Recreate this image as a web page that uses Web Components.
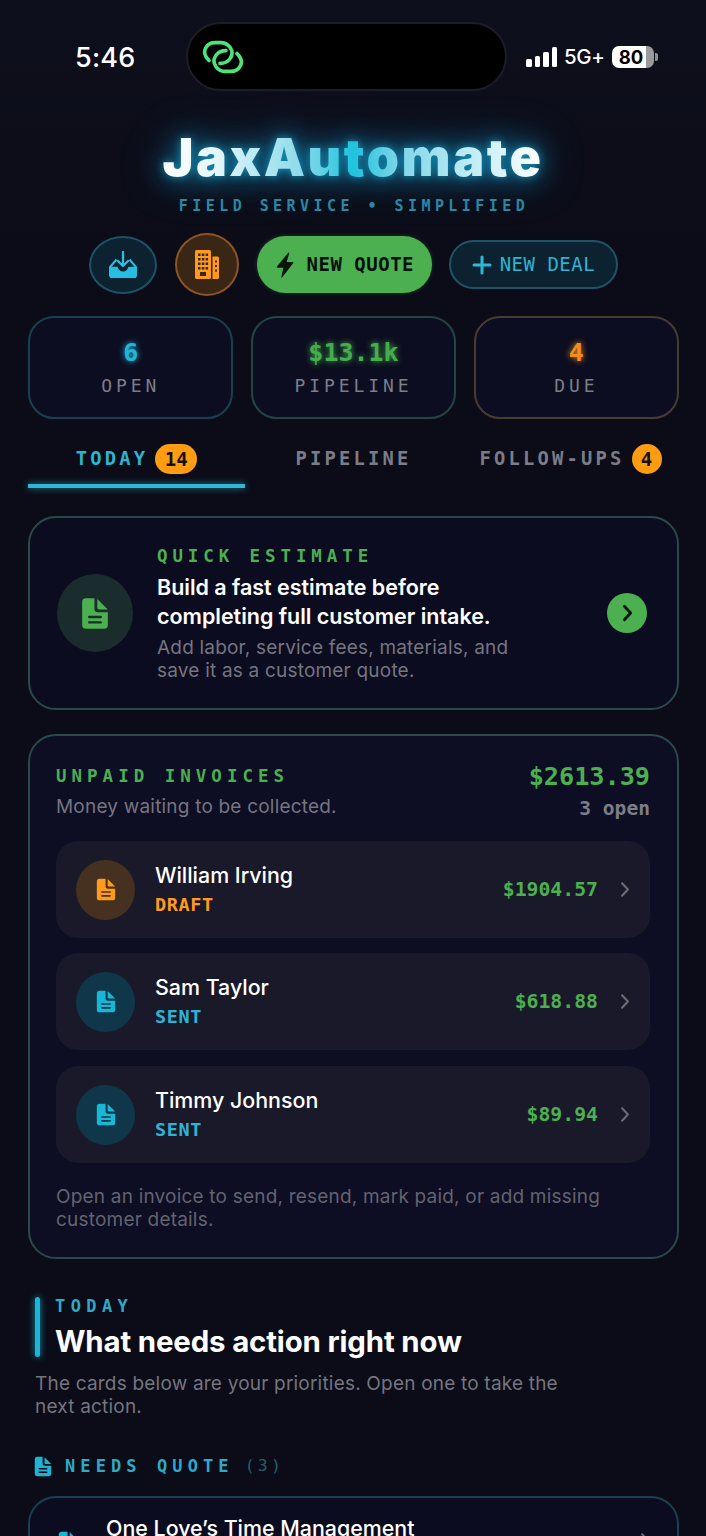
<!doctype html>
<html lang="en">
<head>
<meta charset="utf-8">
<title>JaxAutomate</title>
<style>
html,body{margin:0;padding:0;height:1536px;overflow:hidden;background:#0b0c17}
body{background:linear-gradient(#0e0f1c,#0b0c17 260px);font-family:Inter,"Liberation Sans",sans-serif;color:#fff}
</style>
</head>
<body>
<jax-app></jax-app>
<script>
const MONO='"DejaVu Sans Mono","Liberation Mono",monospace';
const ICONS={
 doc:(c,bg)=>`<svg viewBox="0 0 24 28" width="100%" height="100%"><path fill="${c}" d="M11.500 1H4.200A3.200 3.200 0 0 0 1 4.200v19.600A3.200 3.200 0 0 0 4.200 27h15.600a3.200 3.200 0 0 0 3.200-3.200V13H14.500a3 3 0 0 1-3-3z"/><path fill="${c}" d="M14 1.500V9a1.500 1.500 0 0 0 1.500 1.500H23z"/><path stroke="${bg}" stroke-width="2" stroke-linecap="round" d="M7 17h10M7 21.600h10"/></svg>`,
 chev:(c,w=2.6)=>`<svg viewBox="0 0 12 20" width="100%" height="100%"><path fill="none" stroke="${c}" stroke-width="${w}" stroke-linecap="round" stroke-linejoin="round" d="M2.500 2.500 9.500 10l-7 7.500"/></svg>`
};
function def(name,css,html){
  customElements.define(name,class extends HTMLElement{
    connectedCallback(){
      if(this.shadowRoot)return;
      const s=this.attachShadow({mode:'open'});
      s.innerHTML=`<style>${css}</style>`+(typeof html==='function'?html(this):html);
    }
  });
}
def('jax-status',`
:host{display:flex;align-items:center;height:69px;padding-top:22px;position:relative;font-family:Inter,sans-serif;color:#fff}
.time{width:186px;box-sizing:border-box;padding:2px 0 0 75px;font-size:27px;font-weight:500;letter-spacing:.2px;line-height:1}
.island{width:321px;height:69px;box-sizing:border-box;background:#000;border:2px solid #1d1d29;border-radius:35px;display:flex;align-items:center;padding-left:14px}
.right{display:flex;align-items:center;margin-left:19px;height:30px}
.bars{display:flex;align-items:flex-end;gap:3px;height:20px}
.bars i{display:block;width:5.500px;background:#fff;border-radius:1.500px}
.net{font-size:20.500px;font-weight:500;margin-left:7px;letter-spacing:-.4px}
.bat{margin-left:8px;width:42px;height:22px;border-radius:7px;background:linear-gradient(90deg,#fff 0,#fff 80%,#9a9a9d 80%);color:#000;font-size:18.500px;font-weight:700;display:flex;align-items:center;justify-content:center;padding-right:5px;box-sizing:border-box}
.tip{width:2.500px;height:8px;background:#8f8f92;border-radius:0 2px 2px 0;margin-left:1px}
`,`<div class="time">5:46</div>
<div class="island"><svg width="42" height="34" viewBox="0 0 42 34" fill="none" stroke="#4ee37a" stroke-width="3.600" stroke-linecap="round"><path d="M7 20.500C2.500 16 1.500 11.500 4 7.500 6 4 9 2.600 13 2.600h5.500c4 0 7 1.400 9.500 4.600 2.600 3.600 2.600 8-.2 11.800-2.200 3-5.600 4.400-9.800 4.400"/><path d="M35 13.500c4.500 4.500 5.500 9 3 13-2 3.500-5 4.900-9 4.900h-5.500c-4 0-7-1.400-9.500-4.600-2.600-3.600-2.600-8 .2-11.800 2.200-3 5.600-4.400 9.800-4.400"/></svg></div>
<div class="right"><div class="bars"><i style="height:8px"></i><i style="height:11px"></i><i style="height:15px"></i><i style="height:20px"></i></div><div class="net">5G+</div><div class="bat">80</div><div class="tip"></div></div>`);

def('jax-brand',`
:host{display:block;text-align:center}
.t{margin-top:37px;height:60px;line-height:60px;font-size:52px;font-weight:900;letter-spacing:2.500px;filter:drop-shadow(0 0 4px rgba(25,190,235,.6)) drop-shadow(0 0 12px rgba(20,170,225,.55)) drop-shadow(0 0 20px rgba(20,150,205,.35))}
.t span{background:linear-gradient(90deg,#fff 0%,#e4f6fa 14%,#8edbeb 36%,#1ec3dd 50%,#7ed6e8 62%,#c4edf5 82%,#fff 100%);-webkit-background-clip:text;background-clip:text;color:transparent}
.s{margin-top:8px;font:700 15px/20px ${MONO};letter-spacing:4.450px;color:#2a89a4;padding-left:2px}
`,`<div class="t"><span>JaxAutomate</span></div><div class="s">FIELD SERVICE • SIMPLIFIED</div>`);

def('jax-actions',`
:host{display:flex;justify-content:center;align-items:center;gap:17.600px;margin-top:17px;padding-left:1px;height:63px}
`,`<slot></slot>`);

def('jax-icon-btn',`
:host{display:flex;align-items:center;justify-content:center;box-sizing:border-box;border-radius:50%;border:2px solid var(--b);background:var(--f);width:var(--w);height:var(--h);flex:none}
`,`<slot></slot>`);

def('jax-pill',`
:host{display:flex;align-items:center;justify-content:center;box-sizing:border-box;border-radius:30px;font:700 19px/1 ${MONO};letter-spacing:.5px;flex:none;white-space:nowrap}
:host([kind=green]){width:175px;height:57px;margin-left:1px;background:#4caf50;color:#06100a;gap:13px;box-shadow:0 0 4px rgba(76,175,80,.3)}
:host([kind=ghost]){width:169px;height:49px;margin-left:-1px;border:2px solid #1f5468;background:#0d2230;color:#30b3d3;font-weight:400;gap:8px}
`,`<slot></slot>`);

def('jax-stats',`
:host{display:grid;grid-template-columns:repeat(3,1fr);gap:17.500px;margin:20px 27px 0 28px}
`,`<slot></slot>`);
def('jax-stat',`
:host{display:flex;flex-direction:column;align-items:center;box-sizing:border-box;height:103px;border-radius:26px;border:2px solid var(--b);background:#0c0d20;font-family:${MONO}}
.v{margin-top:21px;font-weight:700;font-size:25px;line-height:28px;color:var(--c);text-shadow:0 0 6px var(--c)}
.l{margin-top:8px;font-size:18px;line-height:22px;letter-spacing:3.900px;color:#7d7d88}
`,h=>`<div class="v">${h.getAttribute('value')}</div><div class="l">${h.getAttribute('label')}</div>`);

def('jax-tabs',`
:host{display:grid;grid-template-columns:repeat(3,217px);margin:13px 0 0 28px;height:56px}
`,`<slot></slot>`);
def('jax-tab',`
:host{display:flex;align-items:flex-start;justify-content:center;gap:7px;box-sizing:border-box;height:56px;padding-top:12px;font:700 18.800px/30px ${MONO};letter-spacing:3.200px;color:#7c7c88;position:relative}
:host([active]){color:#2db3d3}
:host([active])::after{content:"";position:absolute;left:0;right:0;bottom:0;height:4px;background:#2fb7d8;box-shadow:0 0 7px rgba(47,183,216,.7)}
b{display:flex;align-items:center;justify-content:center;min-width:30px;height:30px;padding:0 9.500px;box-sizing:border-box;border-radius:15px;background:#ff9c12;color:#14100a;font-size:19px;font-weight:700;letter-spacing:0}
b.one{padding:0}
`,h=>{const b=h.getAttribute('badge');return `<span>${h.getAttribute('label')}</span>${b?`<b class="${b.length<2?'one':''}">${b}</b>`:''}`});

def('jax-quick',`
:host{display:flex;align-items:center;box-sizing:border-box;height:194px;margin:28px 27px 0 28px;border:2px solid #294a48;border-radius:28px;background:#0c0c20;padding:0 30px 0 27px}
.ic{width:76px;height:78px;border-radius:50%;background:#1a2d2c;display:flex;align-items:center;justify-content:center;flex:none}
.ic div{width:28px;height:35px}
.m{margin-left:24px;flex:1;min-width:0}
.k{font:700 17.500px/22px ${MONO};letter-spacing:4.900px;color:#4caf50}
.t{font-size:21.500px;font-weight:600;line-height:29px;margin-top:6px;color:#fff;letter-spacing:-.02px}
.s{font-size:19px;line-height:23px;color:#757580;margin-top:5px;letter-spacing:.2px}
.go{width:40px;height:40px;border-radius:50%;background:#4caf50;display:flex;align-items:center;justify-content:center;flex:none}
.go div{width:11px;height:18px}
`,`<div class="ic"><div>${ICONS.doc('#4caf50','#1a2d2c')}</div></div>
<div class="m"><div class="k">QUICK ESTIMATE</div><div class="t">Build a fast estimate before<br>completing full customer intake.</div><div class="s">Add labor, service fees, materials, and<br>save it as a customer quote.</div></div>
<div class="go"><div>${ICONS.chev('#0a1a10',3.200)}</div></div>`);

def('jax-invoices',`
:host{display:block;box-sizing:border-box;height:525px;margin:24px 27px 0 28px;border:2px solid #294a48;border-radius:28px;background:#0d0d24;padding:26px 27px 0 26px}
.h{display:flex;justify-content:space-between;height:79px}
.k{font:700 17.500px/24px ${MONO};letter-spacing:5px;color:#4caf50;margin-top:2px}
.sub{font-size:19px;line-height:24px;color:#757580;margin-top:7px;letter-spacing:.2px}
.r{text-align:right;font-family:${MONO}}
.a{font-weight:700;font-size:25.200px;line-height:30px;color:#4caf50}
.o{font-weight:700;font-size:19.600px;line-height:24px;color:#7d7d88;margin-top:4.500px}
.list{display:flex;flex-direction:column;gap:15px}
.f{font-size:19px;line-height:23px;color:#63636f;margin-top:22px;letter-spacing:.2px}
::slotted(:last-child){margin-top:1px}
`,`<div class="h"><div><div class="k">UNPAID INVOICES</div><div class="sub">Money waiting to be collected.</div></div><div class="r"><div class="a">$2613.39</div><div class="o">3 open</div></div></div>
<div class="list"><slot></slot></div>
<div class="f">Open an invoice to send, resend, mark paid, or add missing<br>customer details.</div>`);

def('jax-invoice',`
:host{display:flex;align-items:center;height:97px;box-sizing:border-box;border-radius:22px;background:#191929;padding:0 20px 0 20px}
.ic{width:59px;height:60px;border-radius:50%;display:flex;align-items:center;justify-content:center;flex:none;background:var(--ib)}
.ic div{width:20px;height:25px}
.m{margin-left:20px;flex:1}
.n{font-size:21.400px;font-weight:500;line-height:28px;margin-top:-2px}
.st{font:700 18.500px/24px ${MONO};margin-top:4px;color:var(--c);letter-spacing:.6px}
.v{font:700 19.800px/1 ${MONO};color:#4caf50;margin-right:22px}
.c{width:10px;height:17px;flex:none}
`,h=>{const o=h.getAttribute('tone')==='o',c=o?'#ff9a1f':'#17b7d6',ib=o?'#46301f':'#10364a',tx=o?'#ff9a1f':'#2fb3d5';
 h.style.setProperty('--ib',ib);h.style.setProperty('--c',tx);
 return `<div class="ic"><div>${ICONS.doc(c,ib)}</div></div><div class="m"><div class="n">${h.getAttribute('name')}</div><div class="st">${h.getAttribute('status')}</div></div><div class="v">${h.getAttribute('amount')}</div><div class="c">${ICONS.chev('#6d6d77',2.400)}</div>`});

def('jax-today',`
:host{display:block;margin:38px 0 0 35px}
.top{display:flex;height:60px}
.bar{width:5px;height:60px;border-radius:3px;background:#18b6d6;box-shadow:0 0 7px rgba(24,182,214,.8);flex:none}
.tx{margin-left:15px}
.k{font:700 17px/18px ${MONO};letter-spacing:5.400px;color:#2fa9c8}
.t{font-size:29.400px;font-weight:700;line-height:34px;margin-top:10px;letter-spacing:-.15px}
.s{font-size:19px;line-height:23px;color:#757580;margin-top:15px;letter-spacing:.2px}
`,`<div class="top"><div class="bar"></div><div class="tx"><div class="k">TODAY</div><div class="t">What needs action right now</div></div></div><div class="s">The cards below are your priorities. Open one to take the<br>next action.</div>`);

def('jax-section',`
:host{display:flex;align-items:center;height:24px;margin:36px 0 0 34px;font:700 17px/24px ${MONO};letter-spacing:5.100px;color:#2fa9c8}
.i{width:18px;height:23px;margin-right:13px}
.n{color:#235d72;margin-left:11px;font-weight:400;font-size:16.500px;letter-spacing:3.200px}
`,`<div class="i">${ICONS.doc('#1fb2d3','#0b0c17')}</div><span>NEEDS QUOTE</span><span class="n">(3)</span>`);

def('jax-deal',`
:host{display:flex;box-sizing:border-box;height:90px;margin:18px 27px 0 28px;border:2px solid #1b3f50;border-radius:28px;background:#0c0c20;padding:16px 27px 0 28px}
.i{width:20px;height:25px;margin-top:16px}
.n{font-size:21.400px;font-weight:500;line-height:28px;margin-left:28px;flex:1}
.c{width:10px;height:17px;margin-top:18px}
`,`<div class="i">${ICONS.doc('#1fb2d3','#0c0c20')}</div><div class="n">One Love’s Time Management</div><div class="c">${ICONS.chev('#6d6d77',2.400)}</div>`);

def('jax-app',`:host{display:block;width:706px;height:1536px;overflow:hidden}
.inbox{--w:68px;--h:58px;--b:#1d5266;--f:#0c2230}
.build{--w:64px;--h:63px;--b:#8a5427;--f:#3a2615}
.s1{--b:#17414f}.s2{--b:#234445}.s3{--b:#463d30}`,
`<jax-status></jax-status>
<jax-brand></jax-brand>
<jax-actions>
 <jax-icon-btn class="inbox"><svg width="28" height="27" viewBox="0 0 28 27"><path d="M7.500 8.500 1 16v8a2.500 2.500 0 0 0 2.500 2.500h21A2.500 2.500 0 0 0 27 24v-8l-6.500-7.500" fill="none" stroke="#2cc0e2" stroke-width="2"/><path d="M1 15.800h7.500c.8 3 2.800 4.700 5.500 4.700s4.700-1.700 5.500-4.700H27V24a2.800 2.800 0 0 1-2.800 2.800H3.800A2.800 2.800 0 0 1 1 24z" fill="#27bde0"/><path d="M14 1v13.500M9 10l5 5 5-5" fill="none" stroke="#2cc0e2" stroke-width="2.200" stroke-linecap="round" stroke-linejoin="round"/></svg></jax-icon-btn>
 <jax-icon-btn class="build"><svg width="24" height="29" viewBox="0 0 24 29"><rect x="0" y="0" width="16" height="29" rx="1.500" fill="#ff9a1f"/><path d="M17.500 6.500h5a1.500 1.500 0 0 1 1.500 1.500v19.500a1.500 1.500 0 0 1-1.500 1.500h-5z" fill="#ff9a1f"/><g fill="#3a2615"><rect x="3" y="3.500" width="2.500" height="2.500"/><rect x="6.800" y="3.500" width="2.500" height="2.500"/><rect x="10.600" y="3.500" width="2.500" height="2.500"/><rect x="3" y="8" width="2.500" height="2.500"/><rect x="6.800" y="8" width="2.500" height="2.500"/><rect x="10.600" y="8" width="2.500" height="2.500"/><rect x="3" y="12.500" width="2.500" height="2.500"/><rect x="6.800" y="12.500" width="2.500" height="2.500"/><rect x="10.600" y="12.500" width="2.500" height="2.500"/><rect x="3" y="17" width="2.500" height="2.500"/><rect x="6.800" y="17" width="2.500" height="2.500"/><rect x="10.600" y="17" width="2.500" height="2.500"/><rect x="5" y="22" width="6" height="4"/><rect x="20" y="10.500" width="2" height="2"/><rect x="20" y="15" width="2" height="2"/><rect x="20" y="19.500" width="2" height="2"/></g></svg></jax-icon-btn>
 <jax-pill kind="green"><svg width="18" height="26" viewBox="0 0 18 26"><path fill="#0a160c" d="M12.500.5 1 14.500c-.4.5 0 1.200.6 1.200h5.800L5.300 25.300c-.1.400.4.600.7.300L17.300 11c.3-.5 0-1.100-.6-1.100h-6L13.300 1c.1-.5-.5-.8-.8-.5z"/></svg><span>NEW QUOTE</span></jax-pill>
 <jax-pill kind="ghost"><svg width="20" height="20" viewBox="0 0 20 20"><path d="M10 2v16M2 10h16" stroke="#2fb7d8" stroke-width="3" stroke-linecap="round"/></svg><span>NEW DEAL</span></jax-pill>
</jax-actions>
<jax-stats>
 <jax-stat class="s1" style="--c:#22b5d6" value="6" label="OPEN"></jax-stat>
 <jax-stat class="s2" style="--c:#45ad4c" value="$13.1k" label="PIPELINE"></jax-stat>
 <jax-stat class="s3" style="--c:#f08f1f" value="4" label="DUE"></jax-stat>
</jax-stats>
<jax-tabs>
 <jax-tab active label="TODAY" badge="14"></jax-tab>
 <jax-tab label="PIPELINE"></jax-tab>
 <jax-tab label="FOLLOW-UPS" badge="4"></jax-tab>
</jax-tabs>
<jax-quick></jax-quick>
<jax-invoices>
 <jax-invoice tone="o" name="William Irving" status="DRAFT" amount="$1904.57"></jax-invoice>
 <jax-invoice tone="c" name="Sam Taylor" status="SENT" amount="$618.88"></jax-invoice>
 <jax-invoice tone="c" name="Timmy Johnson" status="SENT" amount="$89.94"></jax-invoice>
</jax-invoices>
<jax-today></jax-today>
<jax-section></jax-section>
<jax-deal></jax-deal>`);
</script>
</body>
</html>
